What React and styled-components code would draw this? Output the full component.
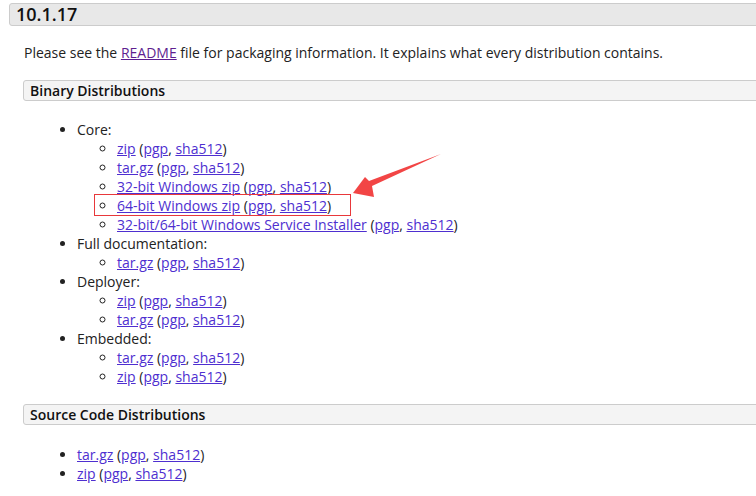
import React from 'react';
import styled, { createGlobalStyle } from 'styled-components';

const GlobalStyle = createGlobalStyle`
  html, body {
    margin: 0;
    padding: 0;
    background: #fff;
    overflow: hidden;
  }
  body {
    font-family: 'Open Sans', 'Liberation Sans', sans-serif;
    font-size: 14px;
    color: #222;
  }
`;

const Page = styled.div`
  position: relative;
  width: 820px;
  padding: 3px 0 0 9px;
`;

const Version = styled.h3`
  margin: 0;
  height: 21px;
  line-height: 21px;
  padding-left: 6px;
  font-size: 18px;
  font-weight: 600;
  background: #e8e8e8;
  border: 1px solid #ccc;
  border-radius: 3px;
  color: #111;
`;

const Section = styled.div`
  padding-left: 14px;
`;

const Para = styled.p`
  margin: 17px 0 0 1px;
  line-height: 19px;
`;

const SubTitle = styled.h4`
  margin: ${p => p.$top || 19}px 0 0;
  height: 19px;
  line-height: 19px;
  padding-left: 6px;
  font-size: 14px;
  font-weight: 600;
  background: #f4f4f4;
  border: 1px solid #ccc;
  border-radius: 3px;
  color: #111;
`;

const List = styled.ul`
  margin: ${p => p.$top || 0}px 0 0;
  padding-left: ${p => p.$indent || 54}px;
  line-height: 19px;
  list-style-type: ${p => p.$circle ? 'circle' : 'disc'};
`;

const Item = styled.li`
  position: relative;
`;

const Link = styled.a`
  color: ${p => p.$visited ? '#5e1e90' : '#4e2fd0'};
  text-decoration: underline;
`;

const Mark = styled.span`
  position: absolute;
  left: -23px;
  top: -2px;
  width: 255px;
  height: 20px;
  border: 1px solid #e8383b;
  pointer-events: none;
`;

const Arrow = styled.svg`
  position: absolute;
  left: 340px;
  top: 145px;
  width: 110px;
  height: 60px;
`;

const Files = ({ name }) => (
  <>
    <Link href="#">{name}</Link> (<Link href="#">pgp</Link>, <Link href="#">sha512</Link>)
  </>
);

const Group = ({ label, files }) => (
  <Item>
    {label}
    <List $circle $indent={40}>
      {files.map((f, i) => (
        <Item key={i}>
          {f.mark && <Mark />}
          <Files name={f.name} />
        </Item>
      ))}
    </List>
  </Item>
);

const App = () => (
  <Page>
    <GlobalStyle />
    <Version>10.1.17</Version>
    <Section>
      <Para>
        Please see the <Link href="#" $visited>README</Link> file for packaging information. It explains what every distribution contains.
      </Para>
      <SubTitle $top={18}>Binary Distributions</SubTitle>
      <List $top={19}>
        <Group label="Core:" files={[
          { name: 'zip' },
          { name: 'tar.gz' },
          { name: '32-bit Windows zip' },
          { name: '64-bit Windows zip', mark: true },
          { name: '32-bit/64-bit Windows Service Installer' },
        ]} />
        <Group label="Full documentation:" files={[{ name: 'tar.gz' }]} />
        <Group label="Deployer:" files={[{ name: 'zip' }, { name: 'tar.gz' }]} />
        <Group label="Embedded:" files={[{ name: 'tar.gz' }, { name: 'zip' }]} />
      </List>
      <SubTitle $top={18}>Source Code Distributions</SubTitle>
      <List $top={20}>
        <Item><Files name="tar.gz" /></Item>
        <Item><Files name="zip" /></Item>
      </List>
    </Section>
    <Arrow viewBox="340 145 110 60">
      <polygon points="353,193 365,177 369,181 441,154 372,186 374,197" fill="#f24545" />
    </Arrow>
  </Page>
);

export default App;
